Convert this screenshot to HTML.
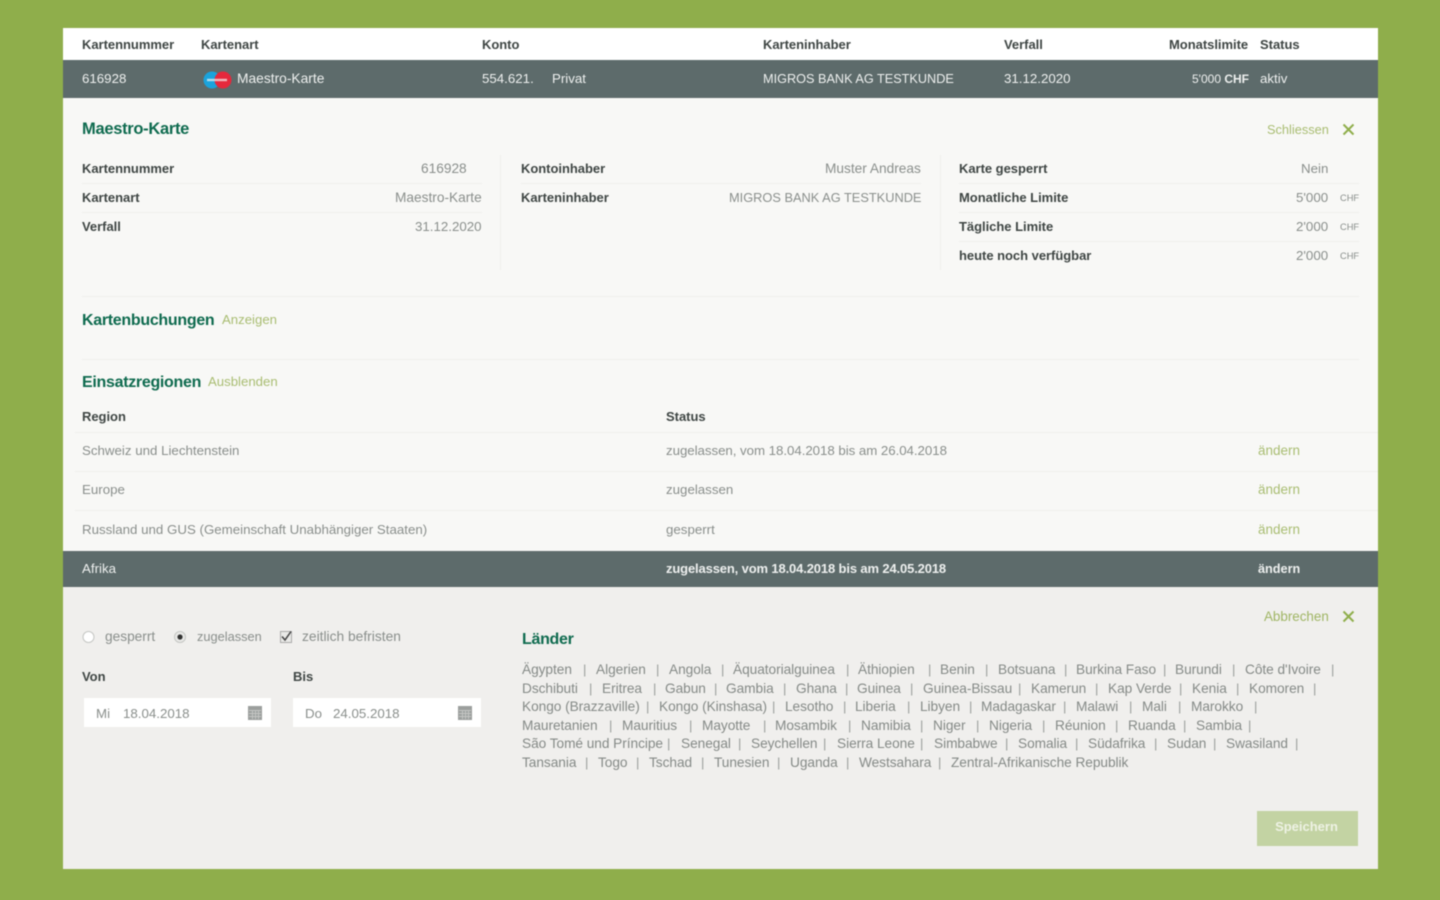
<!DOCTYPE html>
<html lang="de"><head><meta charset="utf-8"><title>Karten</title>
<style>
html,body{margin:0;padding:0;width:1440px;height:900px;overflow:hidden;background:#8fae4b}
body{font-family:"Liberation Sans",sans-serif;font-size:13.3px;color:#8a8f8c}
#w{position:absolute;left:0;top:0;width:1440px;height:900px;filter:blur(.6px)}
.b{position:absolute}
span{position:absolute;white-space:nowrap;line-height:20px;height:20px}
.h{font-weight:bold;color:#3f4644;font-size:13px;letter-spacing:-.03px}
.w{color:#eef0ef}
.g{color:#0f6b4f;font-weight:bold;font-size:16px;letter-spacing:-.3px}
.l{color:#a9bd72;font-size:13.2px}
.f{font-size:9.3px}
.v{font-size:13.7px}
.c{position:absolute;left:0;top:1px}
.c span{color:#858a87;font-size:13.7px;letter-spacing:-.05px}
.c span.p{color:#989d9a;font-size:13px;letter-spacing:0}
.ln{position:absolute;height:1px;background:#efefec}
</style></head><body><div id="w">
<div class="b" style="left:63px;top:28px;width:1315px;height:32px;background:#fff"></div>
<div class="b" style="left:63px;top:60px;width:1315px;height:38px;background:#5d6b6b"></div>
<div class="b" style="left:63px;top:98px;width:1315px;height:453px;background:#f8f8f6"></div>
<div class="b" style="left:63px;top:551px;width:1315px;height:36px;background:#5d6b6b"></div>
<div class="b" style="left:63px;top:587px;width:1315px;height:282px;background:#f0efed"></div>

<span class="h" style="left:82px;top:35px">Kartennummer</span>
<span class="h" style="left:201px;top:35px">Kartenart</span>
<span class="h" style="left:482px;top:35px">Konto</span>
<span class="h" style="left:763px;top:35px">Karteninhaber</span>
<span class="h" style="left:1004px;top:35px">Verfall</span>
<span class="h" style="left:1169px;top:35px">Monatslimite</span>
<span class="h" style="left:1260px;top:35px">Status</span>

<span class="w" style="left:82px;top:69px">616928</span>
<svg class="b" style="left:202px;top:70px" width="30" height="20"><circle cx="10" cy="10" r="8.500" fill="#1ba3dc"/><circle cx="21" cy="10" r="8.500" fill="#e5283c"/><rect x="5" y="8.800" width="20" height="2.400" fill="#f3f3f3" opacity=".7"/></svg>
<span class="w" style="left:237px;top:69px;font-size:13.8px">Maestro-Karte</span>
<span class="w" style="left:482px;top:69px">554.621.</span>
<span class="w" style="left:552px;top:69px">Privat</span>
<span class="w" style="left:763px;top:69px;font-size:12.7px">MIGROS BANK AG TESTKUNDE</span>
<span class="w" style="left:1004px;top:69px">31.12.2020</span>
<span class="w" style="left:1192px;top:69px;font-size:12px">5'000 <b>CHF</b></span>
<span class="w" style="left:1260px;top:69px">aktiv</span>

<span class="g" style="left:82px;top:119px;font-size:16.500px">Maestro-Karte</span>
<span class="l" style="left:1267px;top:120px;font-size:12.800px">Schliessen</span>
<svg class="b" style="left:1342px;top:123px" width="13" height="13"><path d="M1.500 1.500L11.500 11.500M11.500 1.500L1.500 11.500" stroke="#8fae4b" stroke-width="2"/></svg>

<span class="h" style="left:82px;top:159px">Kartennummer</span><span class="v" style="left:421px;top:159px">616928</span>
<span class="h" style="left:82px;top:188px">Kartenart</span><span class="v" style="left:395px;top:188px">Maestro-Karte</span>
<span class="h" style="left:82px;top:217px">Verfall</span><span style="left:415px;top:217px">31.12.2020</span>
<span class="h" style="left:521px;top:159px">Kontoinhaber</span><span class="v" style="left:825px;top:159px">Muster Andreas</span>
<span class="h" style="left:521px;top:188px">Karteninhaber</span><span style="left:729px;top:188px;font-size:12.800px">MIGROS BANK AG TESTKUNDE</span>
<span class="h" style="left:959px;top:159px">Karte gesperrt</span><span style="left:1301px;top:159px">Nein</span>
<span class="h" style="left:959px;top:188px">Monatliche Limite</span><span style="left:1296px;top:188px">5'000</span><span class="f" style="left:1340px;top:188px">CHF</span>
<span class="h" style="left:959px;top:217px">Tägliche Limite</span><span style="left:1296px;top:217px">2'000</span><span class="f" style="left:1340px;top:217px">CHF</span>
<span class="h" style="left:959px;top:246px">heute noch verfügbar</span><span style="left:1296px;top:246px">2'000</span><span class="f" style="left:1340px;top:246px">CHF</span>
<div class="ln" style="left:500px;top:155px;width:1px;height:115px"></div>
<div class="ln" style="left:940px;top:155px;width:1px;height:115px"></div>
<div class="ln" style="left:82px;top:183px;width:400px"></div>
<div class="ln" style="left:82px;top:212px;width:400px"></div>
<div class="ln" style="left:959px;top:183px;width:400px"></div>
<div class="ln" style="left:959px;top:212px;width:400px"></div>
<div class="ln" style="left:959px;top:241px;width:400px"></div>
<div class="ln" style="left:521px;top:183px;width:400px"></div>
<div class="ln" style="left:82px;top:296px;width:1277px"></div>

<span class="g" style="left:82px;top:311px">Kartenbuchungen</span>
<span class="l" style="left:222px;top:310px">Anzeigen</span>
<div class="ln" style="left:82px;top:359px;width:1277px"></div>
<span class="g" style="left:82px;top:373px">Einsatzregionen</span>
<span class="l" style="left:208px;top:372px">Ausblenden</span>

<span class="h" style="left:82px;top:407px">Region</span>
<span class="h" style="left:666px;top:407px">Status</span>
<div class="ln" style="left:75px;top:432px;width:1303px"></div>
<span style="left:82px;top:441px">Schweiz und Liechtenstein</span>
<span style="left:666px;top:441px;letter-spacing:-.05px">zugelassen, vom 18.04.2018 bis am 26.04.2018</span>
<span class="l" style="left:1258px;top:441px;font-size:13.500px">ändern</span>
<div class="ln" style="left:75px;top:471px;width:1303px"></div>
<span style="left:82px;top:480px">Europe</span>
<span style="left:666px;top:480px">zugelassen</span>
<span class="l" style="left:1258px;top:480px;font-size:13.500px">ändern</span>
<div class="ln" style="left:75px;top:510px;width:1303px"></div>
<span style="left:82px;top:520px">Russland und GUS (Gemeinschaft Unabhängiger Staaten)</span>
<span style="left:666px;top:520px">gesperrt</span>
<span class="l" style="left:1258px;top:520px;font-size:13.500px">ändern</span>

<span class="w" style="left:82px;top:559px">Afrika</span>
<span class="w" style="left:666px;top:559px;font-weight:bold;font-size:13px;letter-spacing:-.14px">zugelassen, vom 18.04.2018 bis am 24.05.2018</span>
<span class="w" style="left:1258px;top:559px;font-weight:bold;font-size:12.700px">ändern</span>

<span class="l" style="left:1264px;top:607px;color:#9fb563;font-size:13.400px">Abbrechen</span>
<svg class="b" style="left:1342px;top:610px" width="13" height="13"><path d="M1.500 1.500L11.500 11.500M11.500 1.500L1.500 11.500" stroke="#8fae4b" stroke-width="2"/></svg>

<svg class="b" style="left:80px;top:628px" width="225" height="18">
<circle cx="8.500" cy="9" r="5.500" fill="#fff" stroke="#c4c6c3"/>
<circle cx="100" cy="9" r="5.500" fill="#e9e9e7" stroke="#c4c6c3"/><circle cx="100" cy="9" r="2.600" fill="#333"/>
<rect x="200.500" y="3.500" width="11" height="11" fill="#e9e9e7" stroke="#aaa"/><path d="M202 8.500L205 12L211 3.500" fill="none" stroke="#444" stroke-width="1.500"/>
</svg>
<span style="left:105px;top:627px;font-size:13.700px">gesperrt</span>
<span style="left:197px;top:627px;font-size:12.800px">zugelassen</span>
<span style="left:302px;top:627px;font-size:13.800px">zeitlich befristen</span>

<span class="h" style="left:82px;top:667px">Von</span>
<span class="h" style="left:293px;top:667px">Bis</span>
<div class="b" style="left:84px;top:698px;width:187px;height:29px;background:#fff"></div>
<div class="b" style="left:293px;top:698px;width:188px;height:29px;background:#fff"></div>
<span style="left:96px;top:704px">Mi</span><span style="left:123px;top:704px">18.04.2018</span>
<span style="left:305px;top:704px">Do</span><span style="left:333px;top:704px">24.05.2018</span>
<svg class="b" style="left:248px;top:706px" width="14" height="14"><rect width="14" height="14" fill="#9c9f9d"/><path d="M1 4.500H13M1 7.500H13M1 10.500H13M4.500 4V13M7.500 4V13M10.500 4V13" stroke="#c4c6c4"/></svg>
<svg class="b" style="left:458px;top:706px" width="14" height="14"><rect width="14" height="14" fill="#9c9f9d"/><path d="M1 4.500H13M1 7.500H13M1 10.500H13M4.500 4V13M7.500 4V13M10.500 4V13" stroke="#c4c6c4"/></svg>

<span class="g" style="left:522px;top:630px">Länder</span>

<div class="c">
<span style="left:522px;top:659px">Ägypten</span><span class="p" style="left:583px;top:659px">|</span><span style="left:596px;top:659px">Algerien</span><span class="p" style="left:656px;top:659px">|</span><span style="left:669px;top:659px">Angola</span><span class="p" style="left:721px;top:659px">|</span><span style="left:733px;top:659px">Äquatorialguinea</span><span class="p" style="left:846px;top:659px">|</span><span style="left:858px;top:659px">Äthiopien</span><span class="p" style="left:928px;top:659px">|</span><span style="left:940px;top:659px">Benin</span><span class="p" style="left:985px;top:659px">|</span><span style="left:998px;top:659px">Botsuana</span><span class="p" style="left:1064px;top:659px">|</span><span style="left:1076px;top:659px">Burkina Faso</span><span class="p" style="left:1163px;top:659px">|</span><span style="left:1175px;top:659px">Burundi</span><span class="p" style="left:1232px;top:659px">|</span><span style="left:1245px;top:659px">Côte d'Ivoire</span><span class="p" style="left:1331px;top:659px">|</span>
<span style="left:522px;top:678px">Dschibuti</span><span class="p" style="left:589px;top:678px">|</span><span style="left:602px;top:678px">Eritrea</span><span class="p" style="left:653px;top:678px">|</span><span style="left:665px;top:678px">Gabun</span><span class="p" style="left:714px;top:678px">|</span><span style="left:726px;top:678px">Gambia</span><span class="p" style="left:783px;top:678px">|</span><span style="left:796px;top:678px">Ghana</span><span class="p" style="left:845px;top:678px">|</span><span style="left:857px;top:678px">Guinea</span><span class="p" style="left:910px;top:678px">|</span><span style="left:923px;top:678px">Guinea-Bissau</span><span class="p" style="left:1018px;top:678px">|</span><span style="left:1031px;top:678px">Kamerun</span><span class="p" style="left:1095px;top:678px">|</span><span style="left:1108px;top:678px">Kap Verde</span><span class="p" style="left:1179px;top:678px">|</span><span style="left:1192px;top:678px">Kenia</span><span class="p" style="left:1236px;top:678px">|</span><span style="left:1249px;top:678px">Komoren</span><span class="p" style="left:1313px;top:678px">|</span>
<span style="left:522px;top:696px">Kongo (Brazzaville)</span><span class="p" style="left:646px;top:696px">|</span><span style="left:659px;top:696px">Kongo (Kinshasa)</span><span class="p" style="left:772px;top:696px">|</span><span style="left:785px;top:696px">Lesotho</span><span class="p" style="left:843px;top:696px">|</span><span style="left:855px;top:696px">Liberia</span><span class="p" style="left:907px;top:696px">|</span><span style="left:920px;top:696px">Libyen</span><span class="p" style="left:969px;top:696px">|</span><span style="left:981px;top:696px">Madagaskar</span><span class="p" style="left:1063px;top:696px">|</span><span style="left:1076px;top:696px">Malawi</span><span class="p" style="left:1129px;top:696px">|</span><span style="left:1142px;top:696px">Mali</span><span class="p" style="left:1178px;top:696px">|</span><span style="left:1191px;top:696px">Marokko</span><span class="p" style="left:1254px;top:696px">|</span>
<span style="left:522px;top:715px">Mauretanien</span><span class="p" style="left:609px;top:715px">|</span><span style="left:622px;top:715px">Mauritius</span><span class="p" style="left:689px;top:715px">|</span><span style="left:702px;top:715px">Mayotte</span><span class="p" style="left:763px;top:715px">|</span><span style="left:775px;top:715px">Mosambik</span><span class="p" style="left:848px;top:715px">|</span><span style="left:861px;top:715px">Namibia</span><span class="p" style="left:920px;top:715px">|</span><span style="left:933px;top:715px">Niger</span><span class="p" style="left:976px;top:715px">|</span><span style="left:989px;top:715px">Nigeria</span><span class="p" style="left:1042px;top:715px">|</span><span style="left:1055px;top:715px">Réunion</span><span class="p" style="left:1115px;top:715px">|</span><span style="left:1128px;top:715px">Ruanda</span><span class="p" style="left:1183px;top:715px">|</span><span style="left:1196px;top:715px">Sambia</span><span class="p" style="left:1248px;top:715px">|</span>
<span style="left:522px;top:733px">São Tomé und Príncipe</span><span class="p" style="left:667px;top:733px">|</span><span style="left:681px;top:733px">Senegal</span><span class="p" style="left:738px;top:733px">|</span><span style="left:751px;top:733px">Seychellen</span><span class="p" style="left:823px;top:733px">|</span><span style="left:837px;top:733px">Sierra Leone</span><span class="p" style="left:920px;top:733px">|</span><span style="left:934px;top:733px">Simbabwe</span><span class="p" style="left:1005px;top:733px">|</span><span style="left:1018px;top:733px">Somalia</span><span class="p" style="left:1075px;top:733px">|</span><span style="left:1088px;top:733px">Südafrika</span><span class="p" style="left:1154px;top:733px">|</span><span style="left:1167px;top:733px">Sudan</span><span class="p" style="left:1213px;top:733px">|</span><span style="left:1226px;top:733px">Swasiland</span><span class="p" style="left:1295px;top:733px">|</span>
<span style="left:522px;top:752px">Tansania</span><span class="p" style="left:585px;top:752px">|</span><span style="left:598px;top:752px">Togo</span><span class="p" style="left:636px;top:752px">|</span><span style="left:649px;top:752px">Tschad</span><span class="p" style="left:701px;top:752px">|</span><span style="left:714px;top:752px">Tunesien</span><span class="p" style="left:777px;top:752px">|</span><span style="left:790px;top:752px">Uganda</span><span class="p" style="left:846px;top:752px">|</span><span style="left:859px;top:752px">Westsahara</span><span class="p" style="left:938px;top:752px">|</span><span style="left:951px;top:752px">Zentral-Afrikanische Republik</span>
</div>

<div class="b" style="left:1257px;top:811px;width:101px;height:35px;background:#c3d3a3"></div>
<span style="left:1257px;top:817px;width:99px;text-align:center;color:#eef2e4;font-weight:bold;font-size:13px">Speichern</span>
</div></body></html>
